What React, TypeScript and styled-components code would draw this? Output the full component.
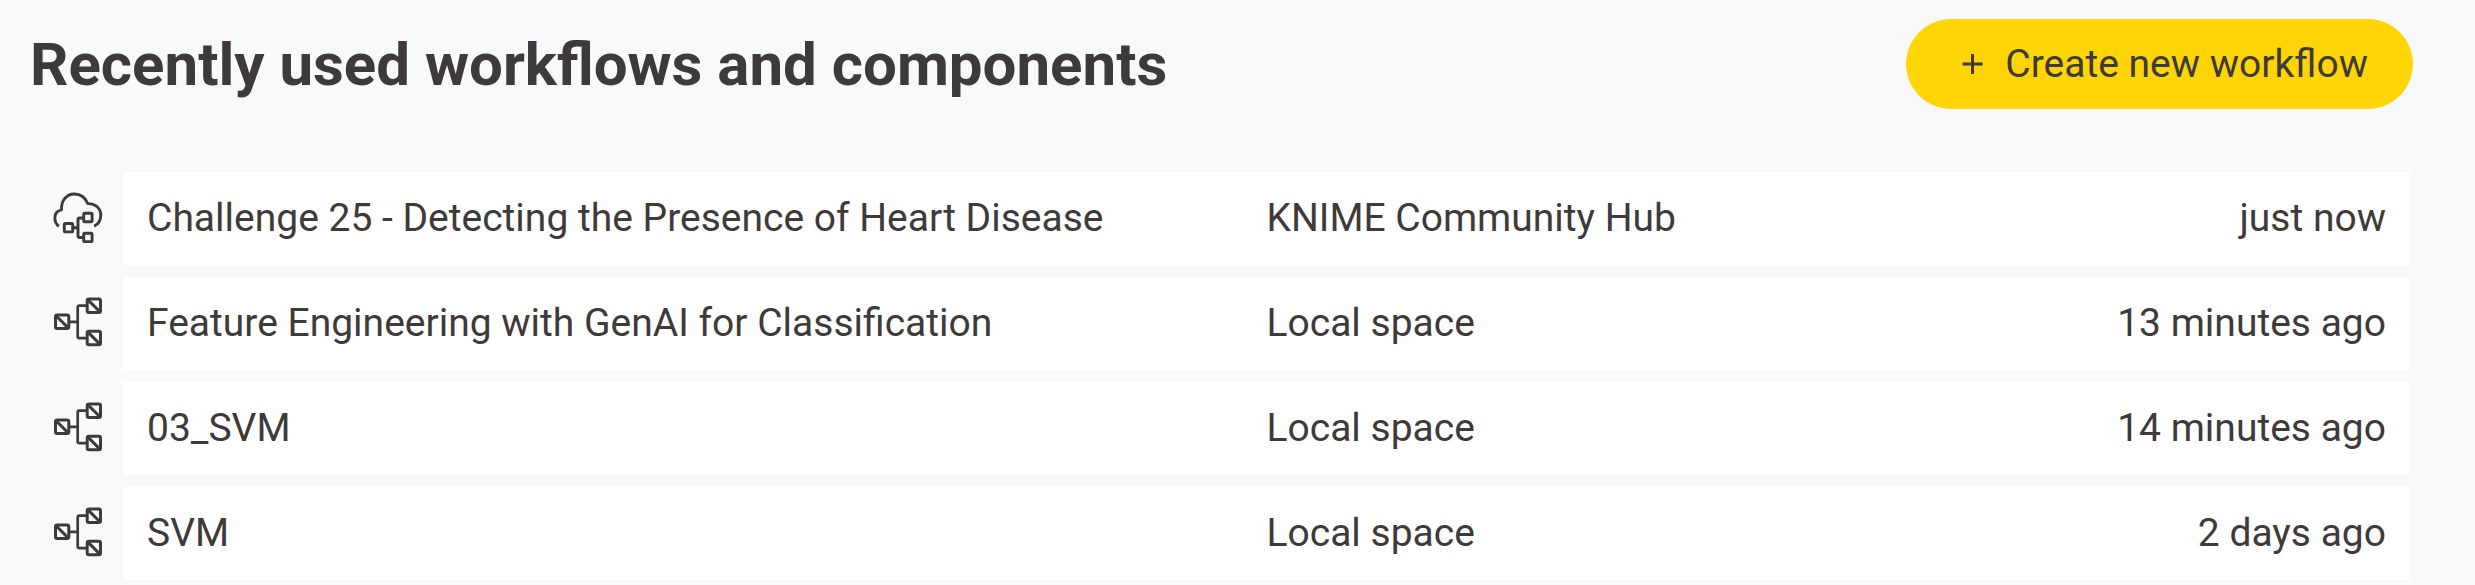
import React from "react";
import styled, { createGlobalStyle } from "styled-components";

const ink = "#3e3a39";

const GlobalStyle = createGlobalStyle`
  * { box-sizing: border-box; }
  body {
    margin: 0;
    background: #f8f9fb;
    color: ${ink};
    font-family: Roboto, "Liberation Sans", sans-serif;
  }
`;

const Page = styled.main`
  padding: 19px 62px 0 30px;
`;

const Header = styled.header`
  display: flex;
  align-items: center;
  justify-content: space-between;
  gap: 24px;
`;

const Title = styled.h1`
  margin: 0;
  padding-top: 2px;
  font-size: 60px;
  font-weight: 700;
  line-height: 72px;
`;

const CreateButton = styled.button`
  display: flex;
  align-items: center;
  gap: 22px;
  flex-shrink: 0;
  height: 90px;
  padding: 0 45px 0 55px;
  border: 0;
  border-radius: 45px;
  background: #ffd505;
  color: ${ink};
  font: 400 39px/48px Roboto, "Liberation Sans", sans-serif;
  cursor: pointer;
`;

const RecentTable = styled.table`
  width: calc(100% - 3px);
  margin-top: 51px;
  table-layout: fixed;
  border-collapse: separate;
  border-spacing: 0 12px;
`;

const IconColumn = styled.col`
  width: 93px;
`;

const Cell = styled.td<{ $align?: "left" | "right"; $pad?: string }>`
  height: 93px;
  padding: ${({ $pad }) => $pad ?? "0 0 2px"};
  overflow: hidden;
  background: #fff;
  font-size: 39px;
  line-height: 48px;
  text-align: ${({ $align }) => $align ?? "left"};
  text-overflow: ellipsis;
  vertical-align: middle;
  white-space: nowrap;
`;

const IconCell = styled.td`
  padding: 0 0 3px 23px;
  vertical-align: middle;

  svg {
    display: block;
    width: 50px;
    height: 52px;
  }
`;

const PlusIcon = () => (
  <svg width="22" height="22" viewBox="0 0 22 22" fill="none" stroke="currentColor" strokeWidth="3" aria-hidden="true">
    <path d="M11.500 1v20M1.500 11h20" />
  </svg>
);

const WorkflowIcon = () => (
  <svg viewBox="0 0 50 52" fill="none" stroke={ink} strokeWidth="3" strokeLinejoin="round" role="img" aria-label="Local workflow">
    <rect x="2.500" y="19" width="13.300" height="13.600" rx="1.800" />
    <rect x="34.200" y="2.900" width="13.300" height="13.600" rx="1.800" />
    <rect x="34.200" y="35.200" width="13.300" height="13.600" rx="1.800" />
    <path d="M3 19.700l12.200 12.200M34.700 3.600l12.200 12.200M34.700 35.900l12.200 12.200" />
    <path strokeWidth="2.700" d="M16 25.800h8.700M34 9.700h-7.600q-1.700 0-1.700 1.700v29q0 1.700 1.700 1.700H34" />
  </svg>
);

const CloudWorkflowIcon = () => (
  <svg viewBox="0 0 50 52" fill="none" stroke={ink} strokeWidth="2.900" strokeLinejoin="round" role="img" aria-label="Hub workflow">
    <path d="M5.800 35.200C3.100 33.300 1.900 30.400 1.900 27.300c0-4.200 2.400-7.600 6.600-8.400C7.900 10.300 13.200 3 21.300 3c6.500 0 11.200 3.700 13.400 9.600C42.400 12.200 47.800 17.400 47.800 24.300c0 4.800-2.400 8.900-6.700 11" />
    <rect x="11.300" y="32.500" width="8.400" height="8.400" rx="1.200" />
    <rect x="30.700" y="22.300" width="8.400" height="8.400" rx="1.200" />
    <rect x="30.700" y="42.300" width="8.400" height="8.400" rx="1.200" />
    <path d="M19.700 36.700h5.300M30.700 27h-4q-1.700 0-1.700 1.700v16.100q0 1.700 1.700 1.700h4" />
  </svg>
);

const items = [
  { name: "Challenge 25 - Detecting the Presence of Heart Disease", place: "KNIME Community Hub", used: "just now", remote: true },
  { name: "Feature Engineering with GenAI for Classification", place: "Local space", used: "13 minutes ago", remote: false },
  { name: "03_SVM", place: "Local space", used: "14 minutes ago", remote: false },
  { name: "SVM", place: "Local space", used: "2 days ago", remote: false },
];

export default function App() {
  return (
    <>
      <GlobalStyle />
      <Page>
        <Header>
          <Title id="recent-title">Recently used workflows and components</Title>
          <CreateButton type="button">
            <PlusIcon />
            Create new workflow
          </CreateButton>
        </Header>
        <RecentTable aria-labelledby="recent-title">
          <colgroup>
            <IconColumn />
            <col span={4} />
          </colgroup>
          <tbody>
            {items.map((item) => (
              <tr key={item.name}>
                <IconCell>{item.remote ? <CloudWorkflowIcon /> : <WorkflowIcon />}</IconCell>
                <Cell colSpan={2} $pad="0 0 2px 24px">{item.name}</Cell>
                <Cell>{item.place}</Cell>
                <Cell $align="right" $pad="0 24px 2px 0">{item.used}</Cell>
              </tr>
            ))}
          </tbody>
        </RecentTable>
      </Page>
    </>
  );
}
